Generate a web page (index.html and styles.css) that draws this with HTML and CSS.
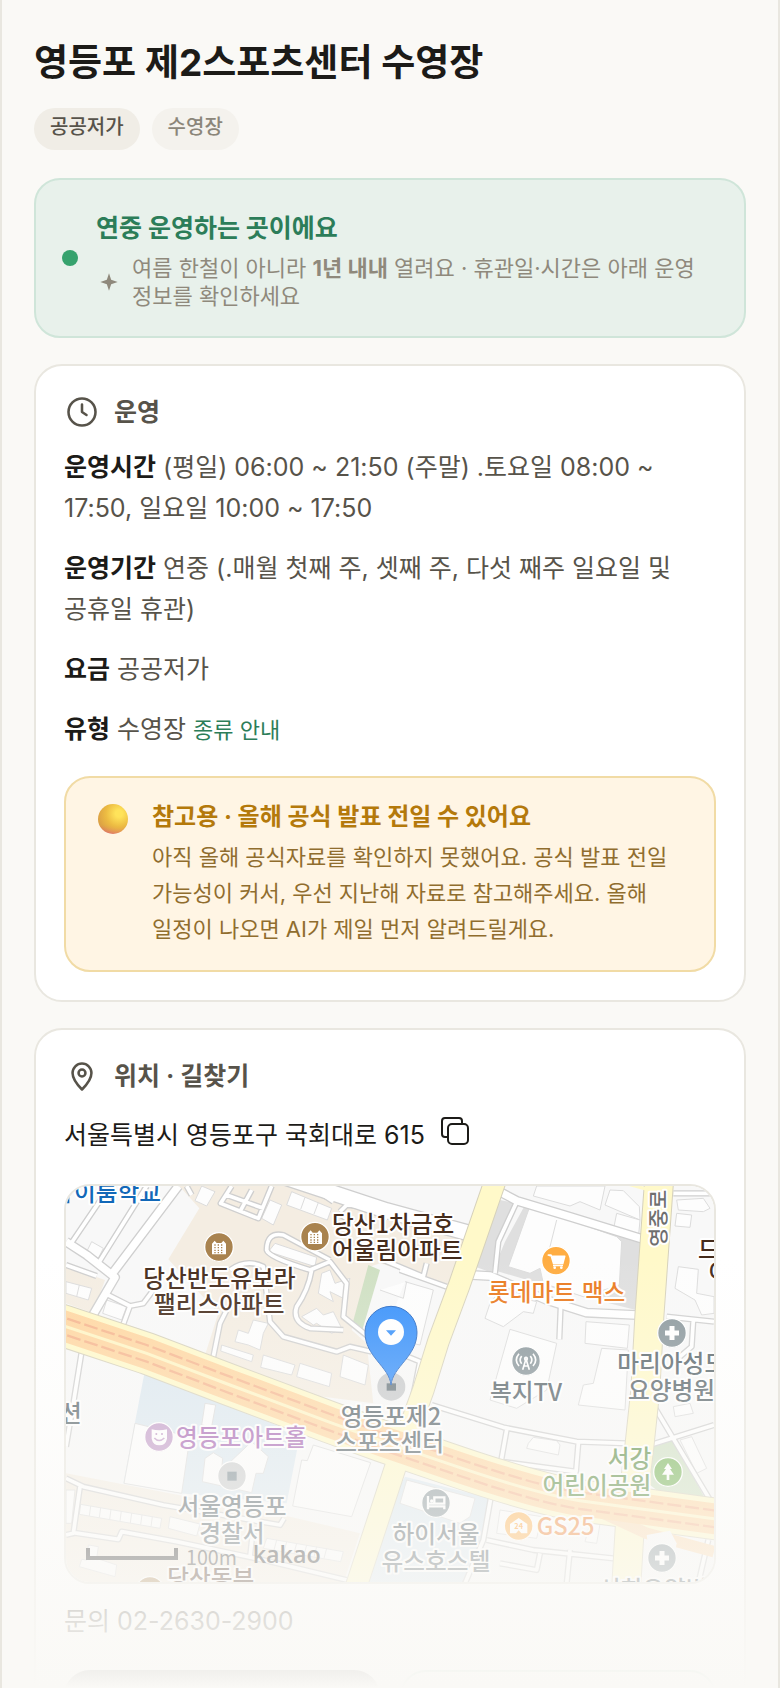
FILE: index.html
```html
<!DOCTYPE html>
<html lang="ko">
<head>
<meta charset="utf-8">
<meta name="viewport" content="width=device-width, initial-scale=1">
<title>영등포 제2스포츠센터 수영장</title>
<link rel="stylesheet" href="styles.css">
</head>
<body>
<main class="page">
  <header class="header">
    <h1 class="title">영등포 제2스포츠센터 수영장</h1>
    <div class="tags">
      <span class="tag tag-strong">공공저가</span>
      <span class="tag">수영장</span>
    </div>
  </header>

  <section class="status">
    <span class="status-dot"></span>
    <div class="status-body">
      <h2 class="status-title">연중 운영하는 곳이에요</h2>
      <div class="status-note">
        <svg class="spark" viewBox="0 0 24 24" aria-hidden="true"><path d="M12 4L14 10 20 12 14 14 12 20 10 14 4 12 10 10z"/></svg>
        <p>여름 한철이 아니라 <strong>1년 내내</strong> 열려요 · 휴관일·시간은 아래 운영 정보를 확인하세요</p>
      </div>
    </div>
  </section>

  <section class="card">
    <h2 class="card-title">
      <svg class="icon" viewBox="0 0 24 24" aria-hidden="true"><circle cx="12" cy="12" r="9"/><path d="M12 7v5l3 2"/></svg>
      운영
    </h2>
    <p class="row"><strong>운영시간</strong> (평일) 06:00 ~ 21:50 (주말) .토요일 08:00 ~ 17:50, 일요일 10:00 ~ 17:50</p>
    <p class="row"><strong>운영기간</strong> 연중 (.매월 첫째 주, 셋째 주, 다섯 째주 일요일 및 공휴일 휴관)</p>
    <p class="row"><strong>요금</strong> 공공저가</p>
    <p class="row"><strong>유형</strong> 수영장 <a class="link" href="#types">종류 안내</a></p>
    <div class="notice">
      <span class="orb"></span>
      <div>
        <h3 class="notice-title">참고용 · 올해 공식 발표 전일 수 있어요</h3>
        <p class="notice-text">아직 올해 공식자료를 확인하지 못했어요. 공식 발표 전일 가능성이 커서, 우선 지난해 자료로 참고해주세요. 올해 일정이 나오면 AI가 제일 먼저 알려드릴게요.</p>
      </div>
    </div>
  </section>

  <section class="card card-place">
    <h2 class="card-title">
      <svg class="icon" viewBox="0 0 24 24" aria-hidden="true"><path d="M12 21C8 17 5.700 13.500 5.700 10a6.300 6.300 0 0 1 12.600 0C18.300 13.500 16 17 12 21z"/><circle cx="12" cy="10" r="2.300"/></svg>
      위치 · 길찾기
    </h2>
    <div class="address">
      <span>서울특별시 영등포구 국회대로 615</span>
      <button class="copy" type="button" aria-label="주소 복사">
        <svg viewBox="0 0 28 28" aria-hidden="true"><rect x="7" y="7" width="20" height="20" rx="4"/><path d="M7 20H4a3 3 0 0 1-3-3V4a3 3 0 0 1 3-3h14a3 3 0 0 1 3 3v3"/></svg>
      </button>
    </div>

    <div class="map">
      <svg class="map-art" viewBox="48 48 1944 1188" preserveAspectRatio="xMidYMid slice" role="img" aria-label="지도">
        <defs>
          <path id="highway" d="M0 455L48 470 290 550 540 645 840 757 1000 815 1230 893C1400 950 1500 978 1590 992L2020 1050"/>
          <g id="flats"><path d="M-21 20V-12l8-9 6 7h14l6-7 8 9V20z" fill="#fff"/><path d="M-14-8H16M-14 0H16M-14 8H16M-14 15H16" stroke="#a9834f" stroke-width="4" stroke-dasharray="4 6" fill="none"/></g>
        </defs>
        <path fill="#f8f8f8" d="M0 0H2100V1300H0z"/>

        <g fill="#f4ede2">
          <path d="M388 48H830L1010 110 1250 200 1200 345 990 280 960 290 905 480 950 520 970 700 740 670 465 555 505 430 355 268 448 115z"/>
          <path d="M48 290L165 330 130 430 48 400z"/>
          <path d="M48 910L720 1040 930 1090 880 1240H48z"/>
        </g>
        <g fill="#dce8f0">
          <path d="M285 600L220 940 390 970 710 1000 745 820 690 770z"/>
          <path d="M1065 920L1320 985 1290 1120 1240 1240H900z"/>
        </g>
        <g fill="#cfe0c3">
          <path d="M955 285L990 300 935 487 905 470z"/>
          <path d="M1805 822L1872 808 1970 995 1840 975 1800 945z"/>
        </g>
        <g fill="#dfdfdf">
          <path d="M1350 90L1400 100 1345 215 1325 308 1280 292z"/>
          <path d="M1425 105L1775 215 1758 420 1600 380 1500 350 1330 300 1365 215z"/>
        </g>

        <g class="building">
          <path d="M1440 108L1700 200 1715 215 1708 345 1600 380 1480 340 1470 295 1440 310 1375 290z"/>
          <path d="M1520 150L1485 290"/>
          <path d="M1460 48H1665L1650 120 1590 95 1560 108 1450 78z"/>
          <path d="M1680 60L1720 62 1768 110 1770 150 1665 105z"/>
          <path d="M1700 130L1770 150 1765 205 1690 180z"/>
          <path d="M1345 368L1460 395 1450 430 1420 425 1360 470 1305 445 1320 400z"/>
          <path d="M1380 478L1520 520 1490 660 1400 715 1320 690z"/>
          <path d="M1608 455L1738 465 1732 535 1605 520z"/>
          <path d="M1655 535L1735 540 1725 720 1585 705 1600 645 1630 640z"/>
          <path d="M1880 90L1960 85 1980 115 1960 125 1885 120z"/>
          <path d="M1880 130L1925 135 1920 172 1875 168z"/>
          <path d="M1885 290L1945 298 1940 370 1992 380V430L1955 435 1935 390 1875 355z"/>
          <path d="M1065 335L1150 360 1110 525 1000 500M990 360L1060 385 1070 335"/>
          <path d="M675 220L800 262 795 290 655 245z"/>
          <path d="M815 310L840 300 855 340 900 325 880 385 840 365 850 395 805 370z"/>
          <path d="M755 440L800 415 820 435 850 425 875 475 845 490 800 460 790 465z"/>
          <path d="M610 450L655 460 640 490 630 540 595 525 555 515 565 480 595 490z"/>
          <path d="M515 525L610 555 605 575 512 543zM640 555L735 585 725 615 632 592zM750 580L845 610 838 650 740 620zM880 555L955 585 945 645 870 620z"/>
          <path d="M725 65L845 115 832 150 710 105zM765 82L752 118M805 98L792 132"/>
          <path d="M660 90L695 105 670 165 635 145zM455 48L495 65 470 108 435 92z"/>
          <path d="M48 335L125 355 115 390 48 370zM88 345L80 380"/>
          <path d="M125 215L160 235 145 265 110 245zM170 390L230 410 215 450 158 430z"/>
          <path d="M255 760L420 800 395 970 222 940z"/>
          <path d="M465 700L497 705 485 770 455 765zM465 865L490 848 518 865 515 900 605 815 655 860 640 910 618 910 605 968 457 935z"/>
          <path d="M790 825L962 878 905 1040 728 1008 755 870 772 872z"/>
          <path d="M92 1003L335 1045 330 1075 88 1033zM122 1008L118 1038M152 1013L148 1043M183 1018L179 1048M214 1023L210 1053M245 1029L241 1059M276 1034L272 1064M307 1040L303 1070"/>
          <path d="M360 1040L450 1062 440 1098 355 1075zM650 1105L880 1145 872 1175 640 1135zM680 1110L672 1140M710 1115L702 1145M740 1120L732 1150M770 1125L762 1155M800 1130L792 1160M830 1135L822 1165"/>
          <path d="M48 960H75L65 1060H48zM115 1125L145 1130 140 1165 200 1185 195 1220 88 1190 95 1168 110 1170z"/>
          <path d="M1070 930L1275 985 1260 1040 1230 1060 1050 1000z"/>
          <path d="M1435 820L1450 802 1520 812 1530 825 1525 855 1430 835z"/>
          <path d="M1890 810L1925 800 1970 895 1940 910zM1870 710L1920 700 1930 730 1875 740z"/>
          <path d="M1350 1020L1475 1040 1460 1105 1340 1090zM1620 1060L1650 1062 1640 1120 1605 1115z"/>
        </g>

        <g class="road-edge">
          <path class="w-l" d="M700 20L1010 122 1260 190"/>
          <path class="w-m" d="M1355 68L1400 92 1560 140 1780 208M1265 315L1320 318 1490 390 1610 428 1760 435M48 215L110 255 195 322 120 450M180 320L385 48"/>
          <path class="w-s" d="M1400 96L1345 215 1335 310M1532 410L1528 508M1850 440L1992 455M1870 70H1992M1145 705L1360 772 1580 815 1730 820M1800 825L1870 803 1992 765M1810 705L1995 1015M1930 450L1925 530 1890 560M1370 780L1352 880M1585 820L1578 905 1355 875"/>
          <path class="w-s" d="M1322 985L1300 1110 1245 1240M1310 1110L1450 1140 1690 1165M1560 1140L1550 1240M1975 1110L1945 1240M1350 1180L1460 1200 1470 1150"/>
          <path class="w-s" d="M180 48L60 225M290 48L148 275M48 285L140 318M165 370L240 408 218 468M240 408L280 400 310 360M95 545L70 700 48 830"/>
          <path class="w-s" d="M840 270L700 195Q650 185 650 240 655 262 780 300L840 275 890 340 880 440 955 500M785 300Q775 360 740 410 725 455 780 475L880 480M540 300Q590 265 640 290L660 455 700 500 860 545 900 530 965 545M530 420L510 460 490 560M410 48L425 75M545 48L512 100 625 145 665 48M570 125L605 60M530 75L640 115M780 48L850 95M870 125L890 105 960 110 1010 150M865 130L910 160M1050 300L1190 350M1000 270L1120 320 1130 280M1000 530L1110 575 1085 700"/>
          <path class="w-s" d="M48 925L100 950 340 1005 690 1065 702 1045M90 950L70 1090 48 1095M70 1088L205 1108 215 1085 380 1115 640 1170 890 1230M610 1070L600 1160"/>
        </g>

        <g class="road-fill">
          <path class="w-l" d="M700 20L1010 122 1260 190"/>
          <path class="w-m" d="M1355 68L1400 92 1560 140 1780 208M1265 315L1320 318 1490 390 1610 428 1760 435M48 215L110 255 195 322 120 450M180 320L385 48"/>
          <path class="w-s" d="M1400 96L1345 215 1335 310M1532 410L1528 508M1850 440L1992 455M1870 70H1992M1145 705L1360 772 1580 815 1730 820M1800 825L1870 803 1992 765M1810 705L1995 1015M1930 450L1925 530 1890 560M1370 780L1352 880M1585 820L1578 905 1355 875"/>
          <path class="w-s" d="M1322 985L1300 1110 1245 1240M1310 1110L1450 1140 1690 1165M1560 1140L1550 1240M1975 1110L1945 1240M1350 1180L1460 1200 1470 1150"/>
          <path class="w-s" d="M180 48L60 225M290 48L148 275M48 285L140 318M165 370L240 408 218 468M240 408L280 400 310 360M95 545L70 700 48 830"/>
          <path class="w-s" d="M840 270L700 195Q650 185 650 240 655 262 780 300L840 275 890 340 880 440 955 500M785 300Q775 360 740 410 725 455 780 475L880 480M540 300Q590 265 640 290L660 455 700 500 860 545 900 530 965 545M530 420L510 460 490 560M410 48L425 75M545 48L512 100 625 145 665 48M570 125L605 60M530 75L640 115M780 48L850 95M870 125L890 105 960 110 1010 150M865 130L910 160M1050 300L1190 350M1000 270L1120 320 1130 280M1000 530L1110 575 1085 700"/>
          <path class="w-s" d="M48 925L100 950 340 1005 690 1065 702 1045M90 950L70 1090 48 1095M70 1088L205 1108 215 1085 380 1115 640 1170 890 1230M610 1070L600 1160"/>
        </g>

        <g class="avenue-edge">
          <path d="M1340 20L1228 345 1165 515 1120 660 1040 880 915 1260" stroke-width="68"/>
          <path d="M1828 20L1798 440 1786 660 1768 830 1740 1060 1728 1260" stroke-width="90"/>
          <use href="#highway" stroke-width="128"/>
        </g>
        <g class="avenue-fill">
          <path d="M1690 30L1800 60V40z" stroke-width="10"/>
          <path d="M1340 20L1228 345 1165 515 1120 660 1040 880 915 1260" stroke-width="62"/>
          <path d="M1828 20L1798 440 1786 660 1768 830 1740 1060 1728 1260" stroke-width="84"/>
          <use href="#highway" stroke-width="122"/>
        </g>
        <path d="M1660 1030L1790 1090 1992 1145" fill="none" stroke="#fcdcb4" stroke-width="34"/>
        <use href="#highway" fill="none" stroke="#ffd6a0" stroke-width="92"/>
        <use href="#highway" fill="none" stroke="#fff5c4" stroke-width="9"/>
        <g fill="none" stroke="#f6b48c" stroke-width="7" stroke-dasharray="42 12">
          <use href="#highway" y="-25"/>
          <use href="#highway" y="25"/>
        </g>
        <path d="M1790 1095L1860 1082 1880 1120 1870 1180 1800 1170z" fill="#f8f8f8"/>

        <g class="poi">
          <circle cx="507" cy="231" r="43" fill="#a9834f"/><use href="#flats" x="507" y="233"/>
          <circle cx="795" cy="200" r="43" fill="#a9834f"/><use href="#flats" x="795" y="202"/>
          <circle cx="1518" cy="272" r="43" fill="#ffad42"/>
          <path d="M1495 255h8l8 26h27l6-22h-38z" fill="#fff" stroke="#fff" stroke-width="5" stroke-linejoin="round"/><path d="M1509 287h30" stroke="#fff" stroke-width="4"/><circle cx="1514" cy="293" r="4" fill="#fff"/><circle cx="1534" cy="293" r="4" fill="#fff"/>
          <circle cx="1866" cy="489" r="43" fill="#8a979c"/><path d="M1866 468v42M1845 489h42" stroke="#fff" stroke-width="15"/>
          <circle cx="1428" cy="573" r="43" fill="#8a979c"/>
          <g fill="none" stroke="#fff" stroke-width="5"><path d="M1418 599l10-32 10 32M1422 588h12M1415 581q-9-11 0-23M1441 581q9-11 0-23M1407 588q-16-18 0-37M1449 588q16-18 0-37"/><circle cx="1428" cy="566" r="4"/></g>
          <circle cx="327" cy="801" r="43" fill="#c29bc9"/><path d="M305 778q22 6 46 0v28q-4 20-23 20t-23-20z" fill="#fff"/><path d="M313 804q14 15 30 0M319 789v6M336 789v6" fill="none" stroke="#c29bc9" stroke-width="5"/>
          <circle cx="546" cy="918" r="43" fill="#cbcdce"/><path d="M532 905h28v27h-28z" fill="#7c8b92"/>
          <circle cx="1158" cy="999" r="43" fill="#8a979c"/><path d="M1134 978v40M1134 1009h49v9M1134 1001h49v-19h-30v19" fill="none" stroke="#fff" stroke-width="7"/><circle cx="1145" cy="993" r="5" fill="#fff"/>
          <circle cx="1406" cy="1068" r="43" fill="#ffb455"/><path d="M1406 1044l26 18v28h-18l-8-9-8 9h-18v-28z" fill="#fff"/><text x="1406" y="1076" font-size="22" font-weight="700" fill="#ff9d2e" text-anchor="middle">24</text>
          <circle cx="1854" cy="906" r="43" fill="#78b559"/><path d="M1854 879l12 18h-6l12 17h-14v16h-8v-16h-14l12-17h-6z" fill="#fff"/>
          <circle cx="1836" cy="1164" r="43" fill="#8a979c"/><path d="M1836 1143v42M1815 1164h42" stroke="#fff" stroke-width="15"/>
          <circle cx="300" cy="1263" r="43" fill="#a9834f"/>
        </g>

        <circle cx="1024" cy="650" r="42" fill="#c8cacc"/><path d="M1010 640h28v22h-28z" fill="#66747b"/>
        <path d="M1023 645C1018 590 945 560 945 487a78 78 0 0 1 156 0C1101 560 1028 590 1023 645z" fill="#3690fb" stroke="#2568c4" stroke-width="3"/>
        <circle cx="1023" cy="486" r="39" fill="#fff"/><path d="M1008 481h30l-15 16z" fill="#3690fb"/>

        <g class="label">
          <path d="M50 66h8v34h-8z" fill="#1268b8"/>
          <text x="72" y="92" fill="#1268b8">이룸학교</text>
          <g fill="#452c1c">
            <text x="508" y="350" text-anchor="middle">당산반도유보라</text>
            <text x="508" y="430" text-anchor="middle">팰리스아파트</text>
            <text x="846" y="188">당산1차금호</text>
            <text x="846" y="266">어울림아파트</text>
            <text x="1944" y="264">드림</text>
            <text x="1976" y="334">아파트</text>
            <text x="352" y="1252">당산동부</text>
          </g>
          <text x="1520" y="393" fill="#ea7a1e" text-anchor="middle">롯데마트 맥스</text>
          <g fill="#566369">
            <text x="1702" y="605">마리아성모</text>
            <text x="1734" y="687">요양병원</text>
            <text x="1428" y="692" text-anchor="middle">복지TV</text>
            <text x="1023" y="764" text-anchor="middle">영등포제2</text>
            <text x="1019" y="844" text-anchor="middle">스포츠센터</text>
            <text x="30" y="755">션</text>
            <text x="546" y="1036" text-anchor="middle">서울영등포</text>
            <text x="546" y="1115" text-anchor="middle">경찰서</text>
            <text x="1158" y="1118" text-anchor="middle">하이서울</text>
            <text x="1158" y="1200" text-anchor="middle">유스호스텔</text>
            <text x="1842" y="1284" text-anchor="middle">서희요양병원</text>
          </g>
          <text x="378" y="828" fill="#a664b3">영등포아트홀</text>
          <g fill="#5c8d44" text-anchor="end"><text x="1804" y="892">서강</text><text x="1804" y="972">어린이공원</text></g>
          <text x="1460" y="1094" fill="#f0873a">GS25</text>
          <text class="label-road" transform="translate(1848 230) rotate(-90)">영중로</text>
        </g>
        <path d="M114 1134v30h264v-30" fill="none" stroke="#333" stroke-width="12"/>
        <text x="408" y="1186" font-size="59" fill="#444">100m</text>
        <text x="608" y="1180" font-size="70" fill="#333" class="brand">kakao</text>
      </svg>
    </div>

    <p class="row contact">문의 02-2630-2900</p>
    <div class="actions">
      <button class="action action-main" type="button" aria-label="길찾기"></button>
      <button class="action" type="button" aria-label="전화하기"></button>
    </div>
  </section>
  <div class="fade"></div>
</main>
</body>
</html>
```
FILE: styles.css
```css
* { box-sizing: border-box; }
body {
  margin: 0;
  background: #faf9f6;
  color: #1c1b18;
  font-family: Inter, "Noto Sans CJK KR", sans-serif;
  font-size: 25px;
  line-height: 40px;
  word-break: keep-all;
}
h1, h2, h3, p { margin: 0; }
button { font: inherit; padding: 0; }

.page {
  position: relative;
  height: 100vh;
  overflow: hidden;
  padding: 36px 32px 0;
  border: solid #e9e7e0;
  border-width: 0 2px;
}
.title { font-size: 37px; line-height: 54px; font-weight: 700; }
.tags { display: flex; gap: 12px; margin-top: 18px; }
.tag {
  height: 42px;
  padding: 0 16px;
  border-radius: 21px;
  background: #f4f2ed;
  color: #8b867a;
  font-size: 20px;
  font-weight: 500;
  line-height: 38px;
}
.tag-strong { background: #f0ede6; color: #57534a; }

.status {
  display: flex;
  align-items: center;
  gap: 18px;
  margin-top: 28px;
  padding: 26px;
  border: 2px solid #cfe5d9;
  border-radius: 26px;
  background: #e8f1eb;
}
.status-dot { flex: none; width: 16px; height: 16px; border-radius: 50%; background: #36a26d; }
.status-title { color: #2c7d59; font-size: 25px; line-height: 44px; font-weight: 700; }
.status-note { display: flex; align-items: center; gap: 10px; margin-top: 4px; color: #8f897c; font-size: 22px; line-height: 28px; }
.spark { flex: none; width: 26px; height: 26px; fill: currentColor; }

.card {
  margin-top: 26px;
  padding: 26px 28px 28px;
  border: 2px solid #e9e7e0;
  border-radius: 28px;
  background: #fff;
}
.card-title { display: flex; align-items: center; gap: 14px; color: #57534a; font-size: 25px; line-height: 40px; font-weight: 700; }
.icon { width: 36px; height: 36px; fill: none; stroke: currentColor; stroke-width: 1.7; stroke-linecap: round; stroke-linejoin: round; }
.row { margin-bottom: 19px; color: #57534a; line-height: 41px; }
.card-title + .row { margin-top: 15px; }
.row strong { color: #1c1b18; font-weight: 700; }
.row .link { color: #2c7d59; font-size: 22px; line-height: 28px; text-decoration: none; }

.notice {
  display: flex;
  gap: 24px;
  margin-top: 26px;
  padding: 20px 24px 23px 32px;
  border: 2px solid #f1dba5;
  border-radius: 26px;
  background: #fff5e4;
}
.orb {
  flex: none;
  width: 30px;
  height: 30px;
  margin-top: 6px;
  border-radius: 50%;
  background:
    radial-gradient(circle at 70% 32%, #ffe35a 0, #ffe35a 12%, rgba(238, 190, 66, 0.9) 45%, rgba(215, 165, 65, 0) 75%),
    linear-gradient(#dba044 70%, #e0766a);
}
.notice-title { color: #b4790b; font-size: 24px; line-height: 38px; font-weight: 700; }
.notice-text { margin-top: 3px; color: #906d2e; font-size: 22px; line-height: 36px; }

.card-place { padding-bottom: 40px; }
.address { display: flex; align-items: flex-start; gap: 12px; margin-top: 19px; color: #1c1b18; }
.copy { display: flex; padding: 2px 4px; border: 0; background: none; color: #1c1b18; }
.copy svg { width: 28px; height: 28px; fill: none; stroke: currentColor; stroke-width: 2; overflow: visible; }

.map {
  height: 400px;
  margin-top: 29px;
  border: 2px solid #e9e7e0;
  border-radius: 26px;
  overflow: hidden;
}
.map-art { display: block; width: 100%; height: 100%; }
.building { fill: #fdfdfd; stroke: #dcdcdc; stroke-width: 3; }
.road-edge, .road-fill { fill: none; stroke-linejoin: round; }
.road-edge { stroke: #cfcfcf; }
.road-fill { stroke: #fff; }
.road-edge .w-l { stroke-width: 52; }
.road-edge .w-m { stroke-width: 30; }
.road-edge .w-s { stroke-width: 19; }
.road-fill .w-l { stroke-width: 44; }
.road-fill .w-m { stroke-width: 22; }
.road-fill .w-s { stroke-width: 11; }
.avenue-edge, .avenue-fill { fill: none; }
.avenue-edge { stroke: #d6d1bb; }
.avenue-fill { stroke: #fff9c9; }
.poi circle[r="43"] { stroke: #fff; stroke-width: 4; }
.map-art text { font-family: "Noto Sans CJK KR", sans-serif; }
.label text { font-size: 71px; font-weight: 500; stroke: #fff; stroke-width: 12px; stroke-linejoin: round; paint-order: stroke; }
.label .label-road { font-size: 62px; fill: #6f6f6f; }
.map-art .brand { font-family: "Open Sans", sans-serif; font-weight: 600; }

.contact { margin: 17px 0 0; }
.actions { display: flex; gap: 20px; margin-top: 28px; }
.action { flex: 1; height: 96px; border: 2px solid #8cc4a8; border-radius: 26px; background: #fff; }
.action-main { border-color: #1c1b18; background: #1c1b18; }

.fade {
  position: absolute;
  right: 0;
  bottom: 0;
  left: 0;
  height: 430px;
  background: linear-gradient(rgba(250, 249, 246, 0), #faf9f6);
  pointer-events: none;
}
```
